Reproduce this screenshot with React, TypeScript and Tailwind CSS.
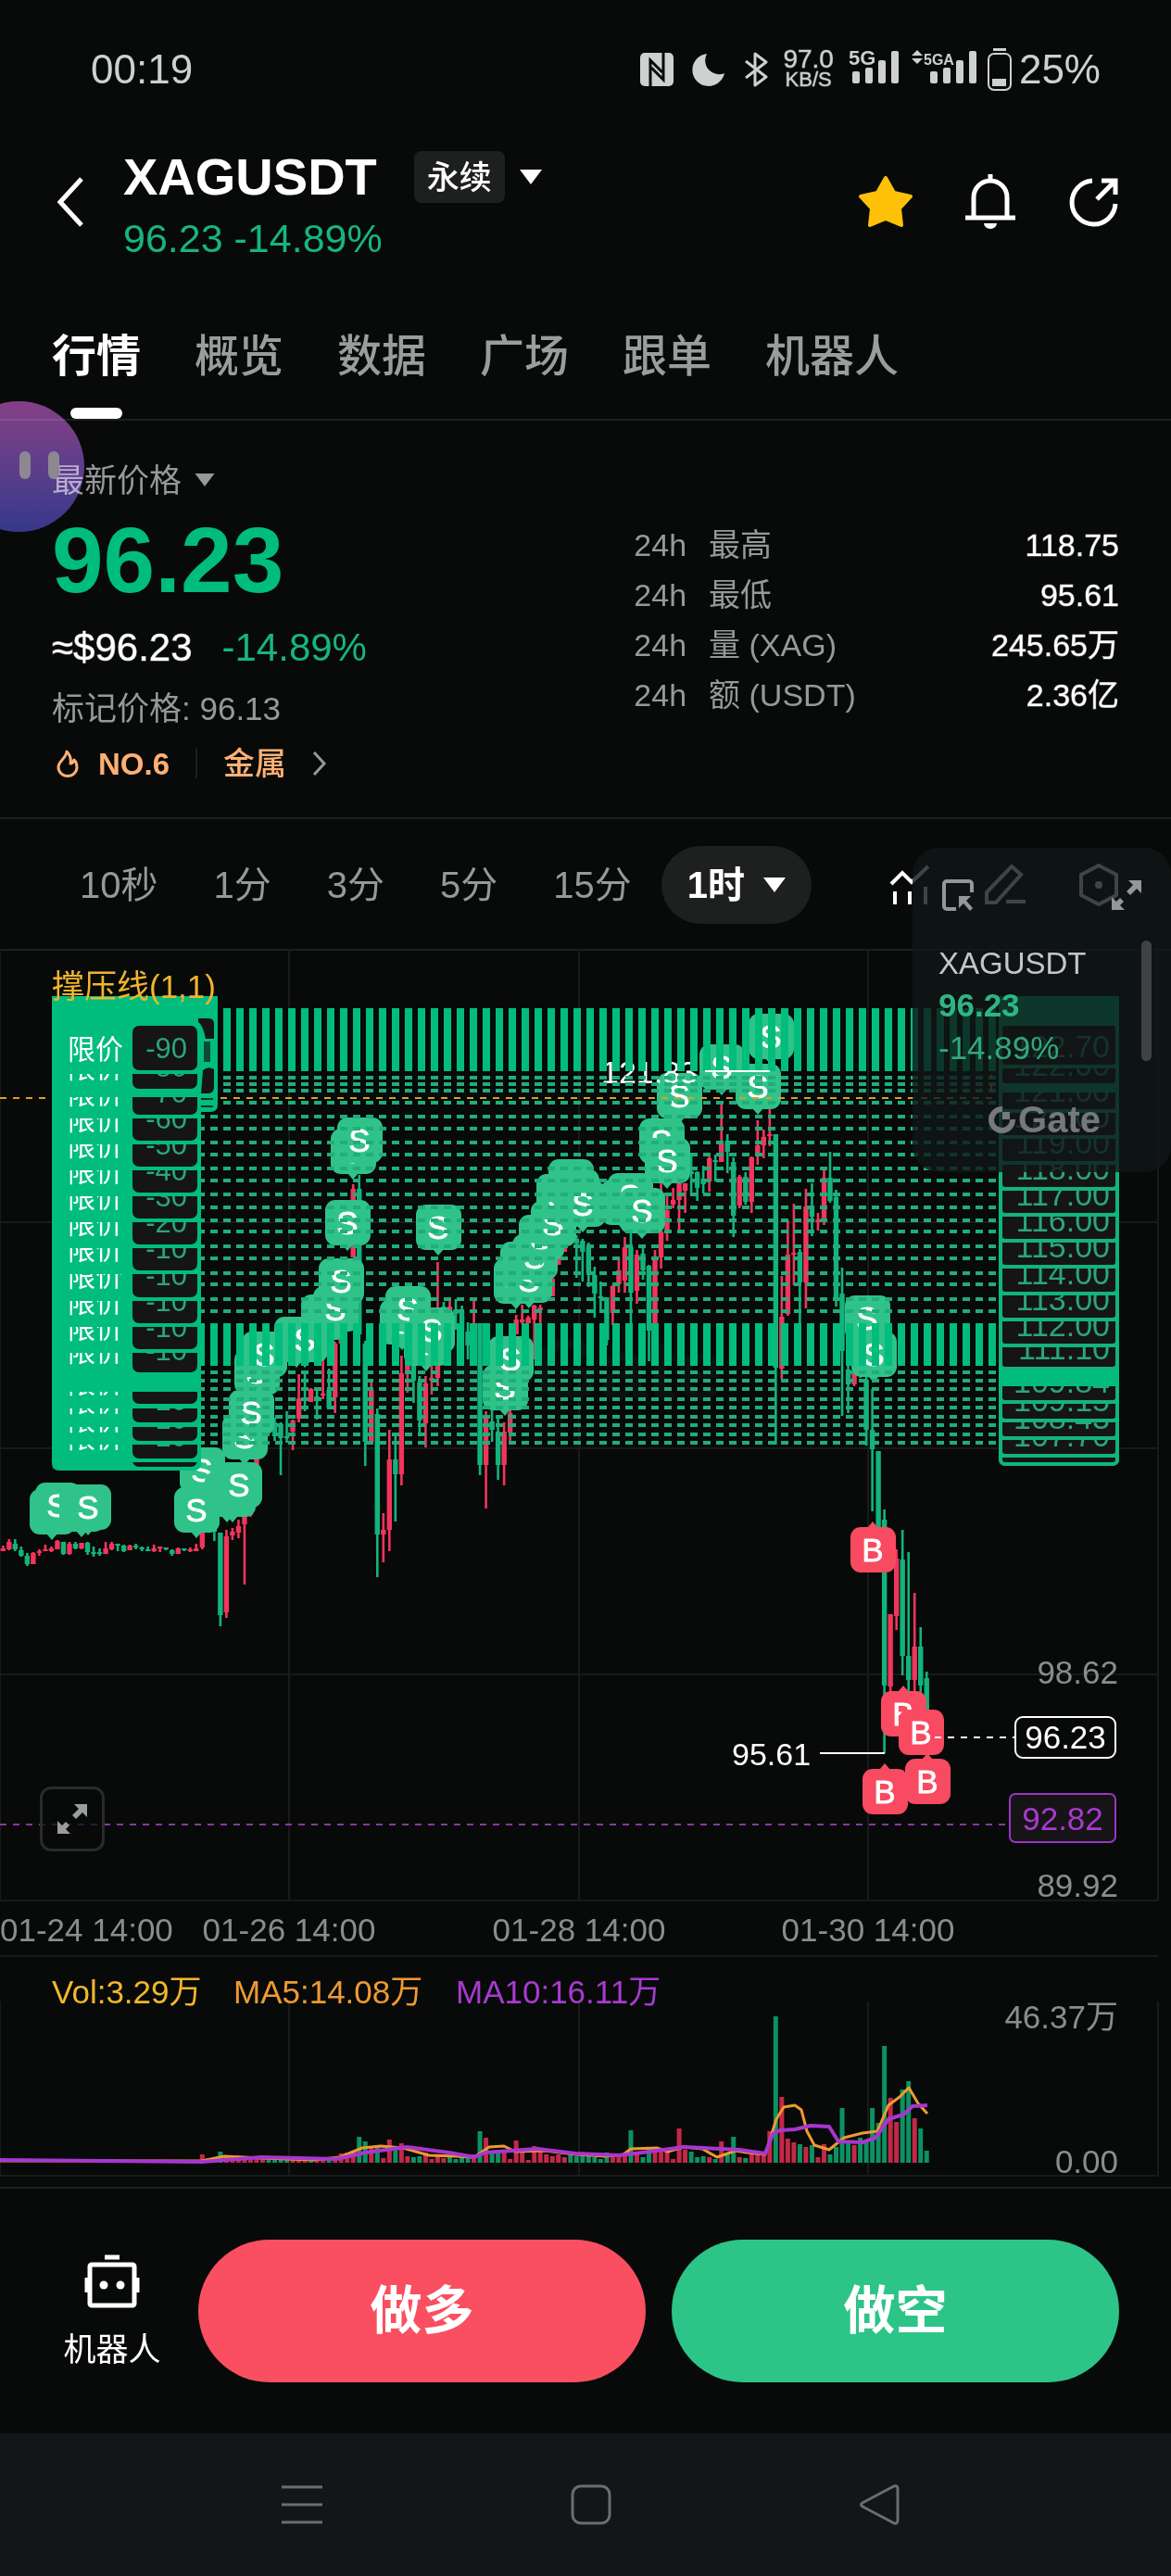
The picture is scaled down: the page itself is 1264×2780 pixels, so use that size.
import React from "react";

const GREEN = "#00bd7e";
const CANDLE_GREEN = "#12b47c";
const RED = "#f2355c";
const SANS = '"Liberation Sans", "Noto Sans CJK SC", sans-serif';

/* ---------- chart data ---------- */

type Candle = [number, "r" | "g", number, number, number, number];

const candles: Candle[] = [
  [0, "r", 1668, 1671, 1674, 1674], [1, "r", 1661, 1664, 1672, 1673], [2, "g", 1661, 1666, 1672, 1674],
  [3, "g", 1669, 1673, 1679, 1680], [4, "g", 1676, 1679, 1688, 1690], [5, "r", 1675, 1676, 1688, 1688],
  [6, "r", 1672, 1674, 1676, 1679], [7, "r", 1667, 1672, 1674, 1674], [8, "r", 1669, 1671, 1674, 1675],
  [9, "r", 1662, 1663, 1672, 1672], [10, "g", 1664, 1664, 1677, 1678], [11, "r", 1664, 1666, 1677, 1678],
  [12, "g", 1664, 1666, 1671, 1672], [13, "r", 1665, 1665, 1671, 1672], [14, "g", 1664, 1665, 1675, 1678],
  [15, "g", 1669, 1675, 1677, 1680], [16, "g", 1671, 1675, 1677, 1679], [17, "r", 1664, 1671, 1677, 1677],
  [18, "r", 1664, 1666, 1672, 1673], [19, "g", 1666, 1666, 1668, 1674], [20, "g", 1667, 1668, 1674, 1675],
  [21, "r", 1667, 1668, 1673, 1673], [22, "g", 1666, 1668, 1670, 1672], [23, "g", 1669, 1670, 1672, 1674],
  [24, "g", 1669, 1672, 1674, 1674], [25, "r", 1667, 1671, 1674, 1675], [26, "r", 1669, 1669, 1671, 1675],
  [27, "g", 1670, 1670, 1672, 1673], [28, "g", 1672, 1673, 1677, 1679], [29, "r", 1670, 1671, 1677, 1677],
  [30, "g", 1671, 1671, 1673, 1674], [31, "r", 1670, 1672, 1674, 1675], [32, "r", 1666, 1671, 1674, 1674],
  [33, "r", 1650, 1651, 1670, 1672], [35, "g", 1640, 1645, 1653, 1663], [36, "g", 1654, 1654, 1743, 1755],
  [37, "r", 1651, 1658, 1740, 1746], [38, "r", 1649, 1653, 1657, 1662], [39, "r", 1640, 1647, 1654, 1660],
  [40, "r", 1636, 1636, 1645, 1710], [41, "r", 1620, 1630, 1635, 1637], [42, "r", 1574, 1575, 1582, 1582],
  [45, "g", 1530, 1535, 1550, 1555], [46, "g", 1535, 1537, 1552, 1592], [47, "g", 1523, 1550, 1552, 1557],
  [48, "r", 1532, 1533, 1545, 1565], [49, "r", 1483, 1509, 1531, 1535], [50, "g", 1480, 1508, 1512, 1523],
  [51, "r", 1498, 1499, 1513, 1513], [52, "g", 1498, 1507, 1510, 1532], [53, "r", 1465, 1504, 1506, 1510],
  [54, "g", 1477, 1500, 1519, 1520], [55, "r", 1448, 1450, 1508, 1525], [56, "r", 1440, 1440, 1450, 1450],
  [58, "r", 1278, 1283, 1357, 1357], [59, "g", 1268, 1283, 1440, 1470], [60, "g", 1447, 1450, 1556, 1582],
  [61, "r", 1490, 1500, 1556, 1558], [62, "g", 1520, 1526, 1656, 1702], [63, "r", 1633, 1651, 1656, 1686],
  [64, "r", 1543, 1575, 1651, 1674], [65, "g", 1550, 1575, 1591, 1642], [66, "r", 1463, 1482, 1591, 1603],
  [67, "r", 1470, 1474, 1480, 1503], [68, "g", 1473, 1474, 1490, 1514], [69, "g", 1485, 1492, 1533, 1550],
  [70, "r", 1485, 1493, 1536, 1562], [71, "r", 1470, 1487, 1490, 1505], [72, "r", 1362, 1473, 1487, 1496],
  [73, "g", 1405, 1410, 1430, 1440], [74, "r", 1401, 1410, 1420, 1430], [75, "g", 1402, 1413, 1418, 1435],
  [76, "g", 1409, 1415, 1436, 1445], [77, "g", 1427, 1437, 1452, 1467], [78, "r", 1403, 1428, 1428, 1428],
  [79, "g", 1428, 1428, 1581, 1592], [80, "r", 1523, 1530, 1581, 1628], [81, "g", 1520, 1534, 1543, 1556],
  [82, "g", 1530, 1545, 1581, 1597], [83, "r", 1535, 1545, 1581, 1603], [84, "r", 1522, 1525, 1546, 1555],
  [85, "r", 1419, 1424, 1440, 1440], [86, "r", 1408, 1424, 1427, 1429], [87, "r", 1420, 1422, 1428, 1428],
  [88, "r", 1408, 1409, 1424, 1467], [89, "r", 1408, 1411, 1414, 1428], [91, "r", 1378, 1380, 1399, 1399],
  [92, "r", 1355, 1357, 1365, 1365], [93, "r", 1344, 1347, 1351, 1351], [95, "g", 1333, 1337, 1342, 1379],
  [96, "g", 1337, 1339, 1351, 1383], [97, "g", 1341, 1346, 1374, 1389], [98, "g", 1367, 1376, 1396, 1422],
  [99, "g", 1383, 1399, 1401, 1417], [100, "g", 1400, 1400, 1446, 1452], [101, "r", 1387, 1388, 1417, 1430],
  [102, "r", 1357, 1371, 1386, 1395], [103, "r", 1335, 1346, 1382, 1395], [104, "g", 1328, 1346, 1395, 1446],
  [105, "r", 1349, 1354, 1393, 1407], [106, "g", 1343, 1353, 1371, 1381], [107, "g", 1365, 1366, 1436, 1469],
  [108, "r", 1349, 1357, 1428, 1428], [109, "r", 1277, 1329, 1357, 1369], [110, "r", 1291, 1306, 1329, 1339],
  [111, "r", 1282, 1295, 1300, 1304], [112, "r", 1277, 1277, 1295, 1331], [113, "r", 1277, 1277, 1285, 1309],
  [114, "g", 1244, 1264, 1267, 1290], [115, "g", 1264, 1265, 1282, 1296], [116, "g", 1258, 1272, 1278, 1288],
  [117, "r", 1247, 1250, 1275, 1286], [118, "g", 1246, 1252, 1254, 1275], [119, "r", 1191, 1234, 1254, 1254],
  [120, "g", 1224, 1231, 1243, 1266], [121, "g", 1249, 1254, 1312, 1335], [122, "r", 1268, 1270, 1301, 1304],
  [123, "g", 1265, 1270, 1297, 1300], [124, "r", 1248, 1249, 1297, 1309], [125, "r", 1209, 1236, 1246, 1257],
  [126, "r", 1219, 1227, 1236, 1250], [127, "r", 1196, 1224, 1226, 1237], [128, "g", 1224, 1224, 1476, 1559],
  [129, "r", 1377, 1421, 1477, 1488], [130, "r", 1317, 1354, 1418, 1420], [131, "r", 1299, 1352, 1354, 1387],
  [132, "g", 1348, 1351, 1384, 1433], [133, "r", 1283, 1302, 1384, 1412], [134, "g", 1277, 1301, 1313, 1334],
  [135, "r", 1309, 1316, 1319, 1328], [136, "r", 1263, 1271, 1317, 1322], [137, "g", 1243, 1271, 1296, 1298],
  [138, "g", 1284, 1292, 1404, 1410], [139, "g", 1368, 1396, 1458, 1528], [140, "g", 1467, 1478, 1494, 1525],
  [141, "r", 1478, 1483, 1494, 1496], [142, "g", 1467, 1478, 1484, 1487], [143, "g", 1485, 1489, 1543, 1560],
  [144, "g", 1499, 1543, 1564, 1631], [145, "g", 1566, 1566, 1650, 1650], [146, "g", 1629, 1640, 1819, 1892],
  [147, "r", 1742, 1742, 1820, 1828], [148, "r", 1672, 1682, 1744, 1759], [149, "g", 1651, 1683, 1787, 1808],
  [150, "g", 1675, 1787, 1813, 1828], [151, "r", 1719, 1777, 1813, 1828], [152, "g", 1756, 1777, 1819, 1828],
  [153, "g", 1804, 1811, 1850, 1850],
];

const candleX = (i: number) => 3.3 + 6.516 * i;

/* Sell markers: centre x, top y */
const sells: [number, number][] = [
  [56, 1607], [62, 1600], [88, 1604], [95, 1602], [218, 1562], [212, 1605], [245, 1588], [251, 1588],
  [258, 1578], [264, 1526], [271, 1500], [277, 1456], [285, 1437], [320, 1421], [329, 1421], [349, 1397],
  [362, 1388], [368, 1358], [375, 1295], [381, 1218], [388, 1206], [434, 1402], [440, 1388], [460, 1425],
  [466, 1411], [473, 1300], [545, 1473], [551, 1442], [557, 1358], [564, 1340], [571, 1357], [577, 1332],
  [584, 1311], [597, 1296], [603, 1267], [616, 1251], [622, 1262], [629, 1275], [673, 1273], [680, 1266],
  [693, 1282], [714, 1207], [720, 1228], [733, 1158], [779, 1127], [818, 1148], [832, 1094], [936, 1398],
  [943, 1437],
];

/* Buy markers: centre x, top y */
const buys: [number, number][] = [
  [942, 1648], [955, 1909], [975, 1825], [1001, 1898], [994, 1845],
];

const orderLines = [
  1163, 1170, 1177, 1190, 1205, 1218, 1233, 1246, 1261, 1274, 1289, 1303, 1317, 1329, 1345, 1358, 1374,
  1386, 1402, 1415, 1481, 1490, 1499, 1510, 1519, 1529, 1538, 1548, 1557,
];

/* Limit-order tags: visible top, bottom, quantity */
const limitTags: [number, number, string][] = [
  [1107, 1155, "-90"], [1159, 1175, "-80"], [1184, 1203, "-70"], [1207, 1231, "-60"], [1235, 1259, "-50"],
  [1263, 1287, "-40"], [1291, 1315, "-30"], [1319, 1343, "-20"], [1347, 1371, "-10"], [1375, 1400, "-10"],
  [1404, 1428, "-10"], [1432, 1456, "-10"], [1460, 1481, "-10"], [1502, 1515, "-10"], [1520, 1535, "-10"],
  [1540, 1555, "-10"], [1559, 1574, "-10"], [1578, 1583, ""],
];

/* Price tags on the axis: visible top, bottom, price */
const priceTags: [number, number, string][] = [
  [1105, 1151, "122.70"], [1151, 1171, "122.00"], [1177, 1199, "121.00"], [1199, 1227, "120.00"],
  [1227, 1255, "119.00"], [1255, 1283, "118.00"], [1283, 1311, "117.00"], [1311, 1339, "116.00"],
  [1339, 1367, "115.00"], [1367, 1396, "114.00"], [1396, 1424, "113.00"], [1424, 1452, "112.00"],
  [1452, 1477, "111.10"], [1494, 1513, "109.84"], [1513, 1533, "109.15"], [1533, 1552, "108.43"],
  [1552, 1571, "107.70"], [1571, 1580, ""],
];

/* Volume bars, first one at candle 33; height in px, then colour */
const volumes =
  "9r 5r 4g 12g 6r 5r 5r 7r 5r 4r 4r 6g 4g 4g 7g 3r 5r 3r 3g 3r 4r 3g 4r 10r 11r 13r 28g 23g 16r 19g 5r 25r 16g 21r 7r 6g 7g 11r 4r 9r 5r 7g 4g 6g 7g 9r 34g 27r 11g 10g 11r 4r 24r 12r 3r 18r 12r 9r 7r 9r 6r 9g 7g 7g 7g 6g 4g 11g 9r 7r 10r 35g 9r 6g 16g 17r 12r 13r 4r 37r 14r 12g 6g 7g 6r 4g 23r 11g 28g 6r 5g 9r 11r 10r 34r 158g 71r 26r 22r 20g 17r 19g 6r 20r 9g 17g 59g 21g 19r 27g 22g 59g 43g 126g 70r 44r 79g 88g 48r 37g 13g".split(
    " ",
  );

const ma5 =
  "0,2332 218,2332 242,2327 282,2329 339,2331 367,2328 391,2318 411,2316 435,2318 463,2326 492,2327 512,2328 528,2317 544,2316 556,2322 588,2321 621,2325 653,2327 673,2325 681,2319 709,2318 721,2322 738,2317 758,2319 774,2328 794,2321 806,2323 826,2325 838,2287 846,2274 858,2272 865,2277 871,2300 879,2315 895,2320 911,2307 931,2302 947,2300 959,2272 971,2263 981,2253 991,2270 1001,2281";
const ma10 =
  "0,2331 218,2333 282,2328 363,2330 395,2323 439,2317 484,2323 512,2328 524,2323 580,2319 621,2324 669,2326 709,2321 738,2317 798,2320 826,2324 834,2303 842,2299 858,2298 875,2294 895,2295 905,2311 931,2312 945,2307 959,2287 975,2282 985,2273 1001,2272";

/* ---------- chart pieces ---------- */

function Marker({ x, y, kind }: { x: number; y: number; kind: "S" | "B" }) {
  const fill = kind === "S" ? "#2fc389" : "#f84a60";
  const tip =
    kind === "S"
      ? `M${x - 6} ${y + 48}L${x} ${y + 55}L${x + 6} ${y + 48}Z`
      : `M${x - 6} ${y + 1}L${x} ${y - 6}L${x + 6} ${y + 1}Z`;
  return (
    <g>
      <rect x={x - 24} y={y} width={49} height={49} rx={11} fill={fill} />
      <path d={tip} fill={fill} />
      <text x={x} y={y + 37} fontSize={35} fill="#fff" stroke="#fff" strokeWidth={0.8} textAnchor="middle">
        {kind}
      </text>
    </g>
  );
}

function LimitTag({ top, bottom, qty }: { top: number; bottom: number; qty: string }) {
  return (
    <svg x={56} y={top} width={160} height={bottom - top} viewBox={`56 ${top} 160 ${bottom - top}`}>
      <rect x={143} y={bottom - 48} width={70} height={48} rx={7} fill="#151515" />
      {qty && (
        <>
          <text x={73} y={bottom - 12} fontSize={30} fill="#fff">
            限价
          </text>
          <text x={202} y={bottom - 13} fontSize={31} fill="#2aa67c" textAnchor="end">
            {qty}
          </text>
        </>
      )}
    </svg>
  );
}

function PriceTag({ top, bottom, price }: { top: number; bottom: number; price: string }) {
  const from = top + 2;
  const height = bottom - from + 2;
  return (
    <svg x={1078} y={from} width={131} height={height} viewBox={`1078 ${from} 131 ${height}`}>
      <rect x={1080} y={bottom - 46} width={126} height={46} rx={5} fill="#151515" stroke="#12b47c" strokeWidth={4} />
      <text x={1198} y={bottom - 10} fontSize={34} fill="#2aa67c" textAnchor="end">
        {price}
      </text>
    </svg>
  );
}

function PriceChart() {
  return (
    <svg viewBox="0 1024 1264 1086" className="block h-auto w-full" fontFamily={SANS} role="img" aria-label="XAGUSDT 1时 K线图">
      <g stroke="#191b1b" strokeWidth={2}>
        <path d="M0 1025H1264" stroke="#1d1f1f" />
        <path d="M0 1319H1250M0 1563H1250M0 1807H1250M0 2051H1250" />
        <path d="M0 1025V2051M312 1025V2051M625 1025V2051M937 1025V2051M1250 1025V2051" />
      </g>
      <g fill="#0d1112">
        <path d="M530 1424a43 43 0 1 0 43 43h-20a23 23 0 1 1 -23 -23z" />
        <text x={576} y={1510} fontSize={92} fontWeight={700}>
          Gate
        </text>
      </g>

      <path d="M0 1969H1089" stroke="#8b36a8" strokeWidth={2} strokeDasharray="7 7" />

      {candles.map(([i, c, h, t, b, l]) => {
        const x = candleX(i);
        const fill = c === "r" ? RED : CANDLE_GREEN;
        return (
          <g key={i} fill={fill}>
            <rect x={x - 1.3} y={h} width={2.6} height={Math.max(l - h, 1)} />
            <rect x={x - 2.7} y={t} width={5.4} height={Math.max(b - t, 1)} />
          </g>
        );
      })}

      {sells.map(([x, y]) => (
        <Marker key={`${x}-${y}`} x={x} y={y} kind="S" />
      ))}

      <text x={649} y={1169} fontSize={34} fill="#fff">
        121.83
      </text>

      <g stroke="#20ad7b" strokeWidth={4} strokeDasharray="8 6">
        {orderLines.map((y) => (
          <path key={y} d={`M213 ${y}H1076`} />
        ))}
      </g>
      <g stroke={GREEN} strokeDasharray="8 6">
        <path d="M213 1122H1076" strokeWidth={68} />
        <path d="M213 1451H1076" strokeWidth={46} />
      </g>
      <path d="M761 1156H831" stroke="#fff" strokeWidth={2} />
      <path d="M0 1185H56M238 1185H1070V1160" stroke="#d9a21f" strokeWidth={2} strokeDasharray="7 7" fill="none" />

      {buys.map(([x, y]) => (
        <Marker key={`${x}-${y}`} x={x} y={y} kind="B" />
      ))}

      {/* limit orders on the left */}
      <path
        d="M56 1075H235V1192Q235 1200 227 1200H217V1579Q217 1587 209 1587H64Q56 1587 56 1579Z"
        fill={GREEN}
      />
      <path d="M214 1099H225Q231 1099 231 1105V1121H222Q219 1106 214 1103Z" fill="#151515" />
      <path d="M220 1124H227V1146H220Z" fill="#0c4a35" />
      <path d="M219 1155Q225 1150 231 1154V1173Q231 1180 225 1180H217Z" fill="#151515" />
      <path d="M217 1186H230M217 1194H230" stroke="#0b3325" strokeWidth={2} />
      {limitTags.map(([t, b, q]) => (
        <LimitTag key={t} top={t} bottom={b} qty={q} />
      ))}
      <text x={56} y={1077} fontSize={35} fill="#f0b42c">
        撑压线(1,1)
      </text>

      {/* price tags on the right */}
      <path d="M1078 1075H1208V1574Q1208 1582 1200 1582H1086Q1078 1582 1078 1574Z" fill={GREEN} />
      {priceTags.map(([t, b, p]) => (
        <PriceTag key={t} top={t} bottom={b} price={p} />
      ))}

      {/* lowest and last price */}
      <text x={790} y={1905} fontSize={34} fill="#fff">
        95.61
      </text>
      <path d="M885 1892H955" stroke="#fff" strokeWidth={2} />
      <path d="M1009 1875H1095" stroke="#fff" strokeWidth={2} strokeDasharray="7 7" />
      <rect x={1096} y={1853} width={108} height={44} rx={8} fill="#070a09" stroke="#fff" strokeWidth={2} />
      <text x={1150} y={1887} fontSize={35} fill="#fff" textAnchor="middle">
        96.23
      </text>
      <rect x={1090} y={1936} width={114} height={52} rx={6} fill="#161417" stroke="#9b35c4" strokeWidth={2} />
      <text x={1147} y={1975} fontSize={35} fill="#a83ad0" textAnchor="middle">
        92.82
      </text>

      <g fontSize={35} fill="#8b8c8d">
        <text x={1207} y={1817} textAnchor="end">98.62</text>
        <text x={1207} y={2047} textAnchor="end">89.92</text>
        <text x={0} y={2095}>01-24 14:00</text>
        <text x={312} y={2095} textAnchor="middle">01-26 14:00</text>
        <text x={625} y={2095} textAnchor="middle">01-28 14:00</text>
        <text x={937} y={2095} textAnchor="middle">01-30 14:00</text>
      </g>
    </svg>
  );
}

function VolumeChart() {
  return (
    <svg viewBox="0 2110 1264 250" className="block h-auto w-full" fontFamily={SANS} role="img" aria-label="成交量">
      <g stroke="#191b1b" strokeWidth={2}>
        <path d="M0 2111H1250M0 2348H1250" />
        <path d="M0 2160V2348M312 2160V2348M625 2160V2348M937 2160V2348M1250 2160V2348" />
      </g>
      {volumes.map((v, k) => {
        const h = parseInt(v, 10);
        return (
          <rect
            key={k}
            x={candleX(k + 33) - 2.5}
            y={2334 - h}
            width={5}
            height={h}
            fill={v.endsWith("r") ? "#c42847" : "#0d9163"}
          />
        );
      })}
      <polyline points={ma5} fill="none" stroke="#ee9a2f" strokeWidth={3} strokeLinejoin="round" />
      <polyline points={ma10} fill="none" stroke="#a836cf" strokeWidth={4} strokeLinejoin="round" />
      <g fontSize={35}>
        <text x={56} y={2162} fill="#f3b62c">Vol:3.29万</text>
        <text x={252} y={2162} fill="#ee9a33">MA5:14.08万</text>
        <text x={492} y={2162} fill="#a83ad0">MA10:16.11万</text>
        <text x={1207} y={2189} fill="#8b8c8d" textAnchor="end">46.37万</text>
        <text x={1207} y={2345} fill="#8b8c8d" textAnchor="end">0.00</text>
      </g>
    </svg>
  );
}

/* ---------- icons ---------- */

function Caret({ className }: { className: string }) {
  return (
    <svg viewBox="0 0 24 16" className={className} fill="currentColor" aria-hidden="true">
      <path d="M0 0H24L12 16Z" />
    </svg>
  );
}

function ExpandArrows({ className }: { className: string }) {
  return (
    <svg viewBox="0 0 32 32" className={className} fill="currentColor" aria-hidden="true">
      <path d="M18 0H32V14L27 9L20 16L16 12L23 5Z" />
      <path d="M14 32H0V18L5 23L9 19L13 23L9 27Z" />
    </svg>
  );
}

function Bars({ x }: { x: number }) {
  return (
    <g>
      <rect x={x} y="25" width="8" height="13" rx="2" />
      <rect x={x + 14} y="21" width="8" height="17" rx="2" />
      <rect x={x + 28} y="13" width="8" height="25" rx="2" />
      <rect x={x + 42} y="3" width="8" height="35" rx="2" />
    </g>
  );
}

function StatusBar() {
  return (
    <div className="flex h-[150px] items-center justify-between pr-[76px] pl-[98px] text-[#cfd0d0]">
      <span className="text-[44px] leading-none">00:19</span>
      <div className="flex items-center">
        <svg viewBox="0 0 36 36" className="h-9 w-9" aria-label="NFC">
          <rect width="36" height="36" rx="5" fill="currentColor" />
          <path d="M11 36V8L24 21" fill="none" stroke="#070a09" strokeWidth="3" />
          <path d="M25 0V29L12 16" fill="none" stroke="#070a09" strokeWidth="3" />
        </svg>
        <svg viewBox="0 0 36 36" className="ml-5 h-9 w-9" fill="currentColor" aria-label="勿扰">
          <path d="M16 1A17.500 17.500 0 1 0 35 22A15 15 0 0 1 16 1Z" />
        </svg>
        <svg viewBox="0 0 26 40" className="ml-5 h-10 w-[26px]" fill="none" stroke="currentColor" strokeWidth="3" aria-label="蓝牙">
          <path d="M2 11L24 28L12 37V3L24 12L2 29" strokeLinejoin="round" />
        </svg>
        <span className="ml-4 flex flex-col items-center leading-[22px] [-webkit-text-stroke:1px_#cfd0d088]">
          <span className="text-[28px]">97.0</span>
          <span className="text-[22px]">KB/S</span>
        </span>
        <svg viewBox="0 0 54 46" className="ml-4 h-[46px] w-[54px]" fill="currentColor" aria-label="5G">
          <text x="0" y="18" fontSize="22" fontWeight="700" fontFamily={SANS}>
            5G
          </text>
          <Bars x={4} />
        </svg>
        <svg viewBox="0 0 70 46" className="ml-[14px] h-[46px] w-[70px]" fill="currentColor" aria-label="5GA">
          <path d="M0 8L6 2L12 8ZM0 11H12L6 17Z" />
          <text x="13" y="18" fontSize="16" fontWeight="700" fontFamily={SANS}>
            5GA
          </text>
          <Bars x={20} />
        </svg>
        <svg viewBox="0 0 26 46" className="ml-3 h-[46px] w-[26px]" fill="none" aria-label="电池">
          <rect x="6" y="0" width="14" height="3" fill="currentColor" />
          <rect x="1" y="6" width="24" height="39" rx="6" stroke="currentColor" strokeWidth="2" />
          <rect x="5" y="33" width="15" height="8" fill="currentColor" />
        </svg>
        <span className="ml-2 text-[44px] leading-none">25%</span>
      </div>
    </div>
  );
}

function Header() {
  return (
    <header className="flex h-[136px] items-center pr-14 pl-[60px]">
      <button type="button" aria-label="返回" className="text-white">
        <svg viewBox="0 0 30 56" className="h-14 w-[30px]" fill="none" stroke="currentColor" strokeWidth="5">
          <path d="M28 3L5 28L28 53" />
        </svg>
      </button>
      <div className="ml-[43px] pt-3">
        <div className="flex h-[66px] items-center">
          <h1 className="text-[56px] leading-none font-bold text-white">XAGUSDT</h1>
          <span className="ml-10 flex h-14 items-center rounded-lg bg-[#1e2020] px-[14px] text-[35px] leading-none font-medium text-white">
            永续
          </span>
          <button type="button" aria-label="切换合约" className="ml-4 text-white">
            <Caret className="h-4 w-6" />
          </button>
        </div>
        <p className="h-[66px] text-[43px] leading-[66px] text-[#17b57e]">96.23 -14.89%</p>
      </div>
      <div className="ml-auto flex items-center">
        <button type="button" aria-label="收藏">
          <svg viewBox="0 0 60 58" className="h-[58px] w-[60px]" fill="#ffc107" stroke="#ffc107" strokeWidth="4" strokeLinejoin="round">
            <path d="M30 3L39 19L57 23L45 36L47 54L30 47L13 54L15 36L3 23L21 19Z" />
          </svg>
        </button>
        <button type="button" aria-label="提醒" className="ml-[56px]">
          <svg viewBox="0 0 54 60" className="h-[60px] w-[54px]" fill="none" stroke="#fff" strokeWidth="5">
            <path d="M9 46V25A18 18 0 0 1 45 25V46M0 47H54M27 0V8" />
            <path d="M20 53H34A7 6 0 0 1 20 53Z" fill="#fff" stroke="none" />
          </svg>
        </button>
        <button type="button" aria-label="分享" className="ml-[58px]">
          <svg viewBox="0 0 54 54" className="h-[54px] w-[54px]" fill="none" stroke="#fff" strokeWidth="5">
            <path d="M25 4A23.500 23.500 0 1 0 50 29" />
            <path d="M30 24L50 4M35 4H50V19" />
          </svg>
        </button>
      </div>
    </header>
  );
}

const tabs = ["行情", "概览", "数据", "广场", "跟单", "机器人"];

function Tabs() {
  return (
    <nav className="flex h-[168px] gap-[58px] border-b-2 border-[#1d1f1f] px-14">
      {tabs.map((t, i) => (
        <button
          key={t}
          type="button"
          className={
            i === 0
              ? "relative pt-8 text-[48px] font-bold text-white"
              : "relative pt-8 text-[48px] font-medium text-[#9a9c9d]"
          }
        >
          {t}
          {i === 0 && <span className="absolute bottom-0 left-1/2 h-3 w-14 -translate-x-1/2 rounded-full bg-white" />}
        </button>
      ))}
    </nav>
  );
}

const stats: [string, string][] = [
  ["最高", "118.75"],
  ["最低", "95.61"],
  ["量 (XAG)", "245.65万"],
  ["额 (USDT)", "2.36亿"],
];

function Overview() {
  return (
    <section className="relative grid grid-cols-[6fr_5fr] border-b-2 border-[#1d1f1f] px-14 pt-9 pb-7">
      <div>
        <button type="button" className="flex h-14 items-center gap-[14px] text-[35px] leading-none text-[#96989a]">
          最新价格
          <Caret className="h-[14px] w-[22px]" />
        </button>
        <p className="text-[100px] leading-[116px] font-bold text-[#00bd7e]">96.23</p>
        <p className="flex gap-8 text-[42px] leading-[74px]">
          <span className="text-white [-webkit-text-stroke:1px_#ffffff77]">≈$96.23</span>
          <span className="text-[#17b57e]">-14.89%</span>
        </p>
        <p className="text-[35px] leading-[58px] text-[#96989a]">标记价格: 96.13</p>
        <div className="flex h-[60px] items-center text-[33px] leading-none font-bold text-[#ffb073]">
          <svg viewBox="0 0 26 30" className="ml-1 h-[30px] w-[26px]" fill="none" stroke="currentColor" strokeWidth="3" strokeLinejoin="round">
            <path d="M12 2C12 9 3 12 3 19A10 9.500 0 0 0 23 19C23 16 22 13 20 11C19 14 17 15 16 15C17 10 15 5 12 2Z" />
          </svg>
          <span className="ml-5">NO.6</span>
          <span className="ml-7 h-8 w-0.5 bg-[#1d1f1f]" />
          <a href="#metal" className="ml-7 flex items-center gap-7 text-[34px] font-medium">
            金属
            <svg viewBox="0 0 16 28" className="h-7 w-4 text-[#96989a]" fill="none" stroke="currentColor" strokeWidth="3">
              <path d="M2 2L13 14L2 26" />
            </svg>
          </a>
        </div>
      </div>
      <dl className="pt-[71px] text-[34px] leading-[54px]">
        {stats.map(([k, v]) => (
          <div key={k} className="flex justify-between">
            <dt className="flex gap-6 text-[#96989a]">
              <span>24h</span>
              <span>{k}</span>
            </dt>
            <dd className="text-white [-webkit-text-stroke:1px_#ffffff77]">{v}</dd>
          </div>
        ))}
      </dl>
      <div className="absolute -top-[21px] -left-[50px] h-[141px] w-[141px] rounded-full bg-gradient-to-b from-[#803781] to-[#302f88] mix-blend-screen" />
      <span className="absolute top-[33px] left-[21px] h-[30px] w-3 rounded-full bg-[#8d8890]" />
      <span className="absolute top-[33px] left-[52px] h-[30px] w-3 rounded-full bg-[#8d8890]" />
    </section>
  );
}

const frames = ["10秒", "1分", "3分", "5分", "15分"];

function Toolbar() {
  return (
    <div className="flex h-[140px] items-center pt-0.5 pr-14 pl-[86px] text-[40px] leading-none text-[#96989a]">
      <div className="flex gap-[60px]">
        {frames.map((f) => (
          <button key={f} type="button">
            {f}
          </button>
        ))}
      </div>
      <button type="button" className="ml-8 flex h-[84px] items-center gap-5 rounded-full bg-[#1e2020] px-7 font-bold text-white">
        1时
        <Caret className="h-4 w-6" />
      </button>
      <div className="ml-auto flex items-center text-white">
        <button type="button" aria-label="指标">
          <svg viewBox="0 0 44 44" className="h-11 w-11" fill="none" stroke="currentColor" strokeWidth="4">
            <path d="M2 21L14 9L24 19L42 2M6 29V43M22 29V43M39 24V43" />
          </svg>
        </button>
        <button type="button" aria-label="画线" className="ml-[58px]">
          <svg viewBox="0 0 46 46" className="h-[46px] w-[46px]" fill="none" stroke="currentColor" strokeWidth="4">
            <path d="M3 31L30 3L40 12L13 42L3 42ZM24 41H45" />
          </svg>
        </button>
        <button type="button" aria-label="设置" className="ml-[56px]">
          <svg viewBox="0 0 44 48" className="h-12 w-11" fill="none" stroke="currentColor" strokeWidth="4">
            <path d="M22 3L41 13V35L22 45L3 35V13Z" />
            <circle cx="22" cy="24" r="4" fill="currentColor" stroke="none" />
          </svg>
        </button>
      </div>
    </div>
  );
}

function FloatingWindow() {
  return (
    <aside className="absolute top-[31px] right-0 h-[350px] w-[279px] rounded-[28px] bg-[#101517]/80 px-7">
      <div className="flex items-center justify-between pt-[34px] pr-1 pl-1 text-[#949697]">
        <button type="button" aria-label="窗口">
          <svg viewBox="0 0 34 34" className="h-[34px] w-[34px]" fill="none" stroke="currentColor" strokeWidth="4">
            <path d="M15 32H5A3 3 0 0 1 2 29V5A3 3 0 0 1 5 2H29A3 3 0 0 1 32 5V14" />
            <path d="M18 18H31L26 23L33 31L30 34L23 26L18 31Z" fill="currentColor" stroke="none" />
          </svg>
        </button>
        <button type="button" aria-label="放大">
          <ExpandArrows className="h-8 w-8" />
        </button>
      </div>
      <p className="mt-[34px] text-[33px] leading-[46px] text-[#c4c5c6]">XAGUSDT</p>
      <p className="text-[35px] leading-[44px] font-bold text-[#2fb584]">96.23</p>
      <p className="text-[35px] leading-[48px] text-[#2fa97c]">-14.89%</p>
      <div className="mt-8 flex items-center justify-end gap-0.5 pr-12 text-[40px] leading-[42px] font-bold text-[#75797a]">
        <svg viewBox="0 0 30 30" className="h-[30px] w-[30px]" fill="none" aria-hidden="true">
          <path d="M15 4A11.500 11.500 0 1 0 26 15" stroke="currentColor" strokeWidth="6" />
          <rect x="15" y="7" width="8" height="8" fill="currentColor" />
        </svg>
        Gate
      </div>
      <span className="absolute top-[100px] right-[21px] h-[130px] w-[11px] rounded-full bg-[#3f4146]" />
    </aside>
  );
}

function ActionBar() {
  return (
    <div className="flex h-[266px] items-center gap-7 border-t-2 border-[#1d1f1f] px-14">
      <button type="button" className="flex w-[130px] flex-col items-center pt-1 text-[35px] leading-[48px] text-white">
        <svg viewBox="0 0 60 60" className="mb-5 h-[60px] w-[60px]" fill="none" stroke="#fff" strokeWidth="5">
          <rect x="6" y="12" width="48" height="44" rx="2" />
          <path d="M22 4H38M3 26V42M57 26V42" />
          <circle cx="21" cy="34" r="4.500" fill="#fff" stroke="none" />
          <circle cx="39" cy="34" r="4.500" fill="#fff" stroke="none" />
        </svg>
        机器人
      </button>
      <button type="button" className="h-[154px] flex-1 rounded-full bg-[#f94f61] text-[56px] font-bold text-white">
        做多
      </button>
      <button type="button" className="h-[154px] flex-1 rounded-full bg-[#2dc488] text-[56px] font-bold text-white">
        做空
      </button>
    </div>
  );
}

function SystemNav() {
  return (
    <nav className="grid h-[154px] grid-cols-3 items-center justify-items-center bg-[#141517] pr-[158px] pl-[170px] text-[#6c6d6e]">
      <button type="button" aria-label="最近任务">
        <svg viewBox="0 0 44 44" className="h-11 w-11" fill="none" stroke="currentColor" strokeWidth="3">
          <path d="M0 3H44M0 22H44M0 41H44" />
        </svg>
      </button>
      <button type="button" aria-label="主屏幕">
        <svg viewBox="0 0 44 44" className="h-11 w-11" fill="none" stroke="currentColor" strokeWidth="3">
          <rect x="2" y="2" width="40" height="40" rx="9" />
        </svg>
      </button>
      <button type="button" aria-label="返回上一页">
        <svg viewBox="0 0 44 44" className="h-11 w-11" fill="none" stroke="currentColor" strokeWidth="3" strokeLinejoin="round">
          <path d="M3 20L37 2Q41 1 41 5V39Q41 43 37 42L3 24Q0 22 3 20Z" />
        </svg>
      </button>
    </nav>
  );
}

export default function App() {
  return (
    <div className="relative min-h-screen overflow-hidden bg-[#070a09] [font-family:'Liberation_Sans','Noto_Sans_CJK_SC',sans-serif]">
      <StatusBar />
      <Header />
      <Tabs />
      <Overview />
      <main className="relative">
        <Toolbar />
        <div className="relative">
          <PriceChart />
          <button
            type="button"
            aria-label="全屏"
            className="absolute bottom-[112px] left-[43px] flex h-[70px] w-[70px] items-center justify-center rounded-xl border-3 border-[#2a2b2b] bg-[#070a09]/70 text-[#9b9c9d]"
          >
            <ExpandArrows className="h-8 w-8" />
          </button>
        </div>
        <VolumeChart />
        <FloatingWindow />
      </main>
      <ActionBar />
      <SystemNav />
    </div>
  );
}
